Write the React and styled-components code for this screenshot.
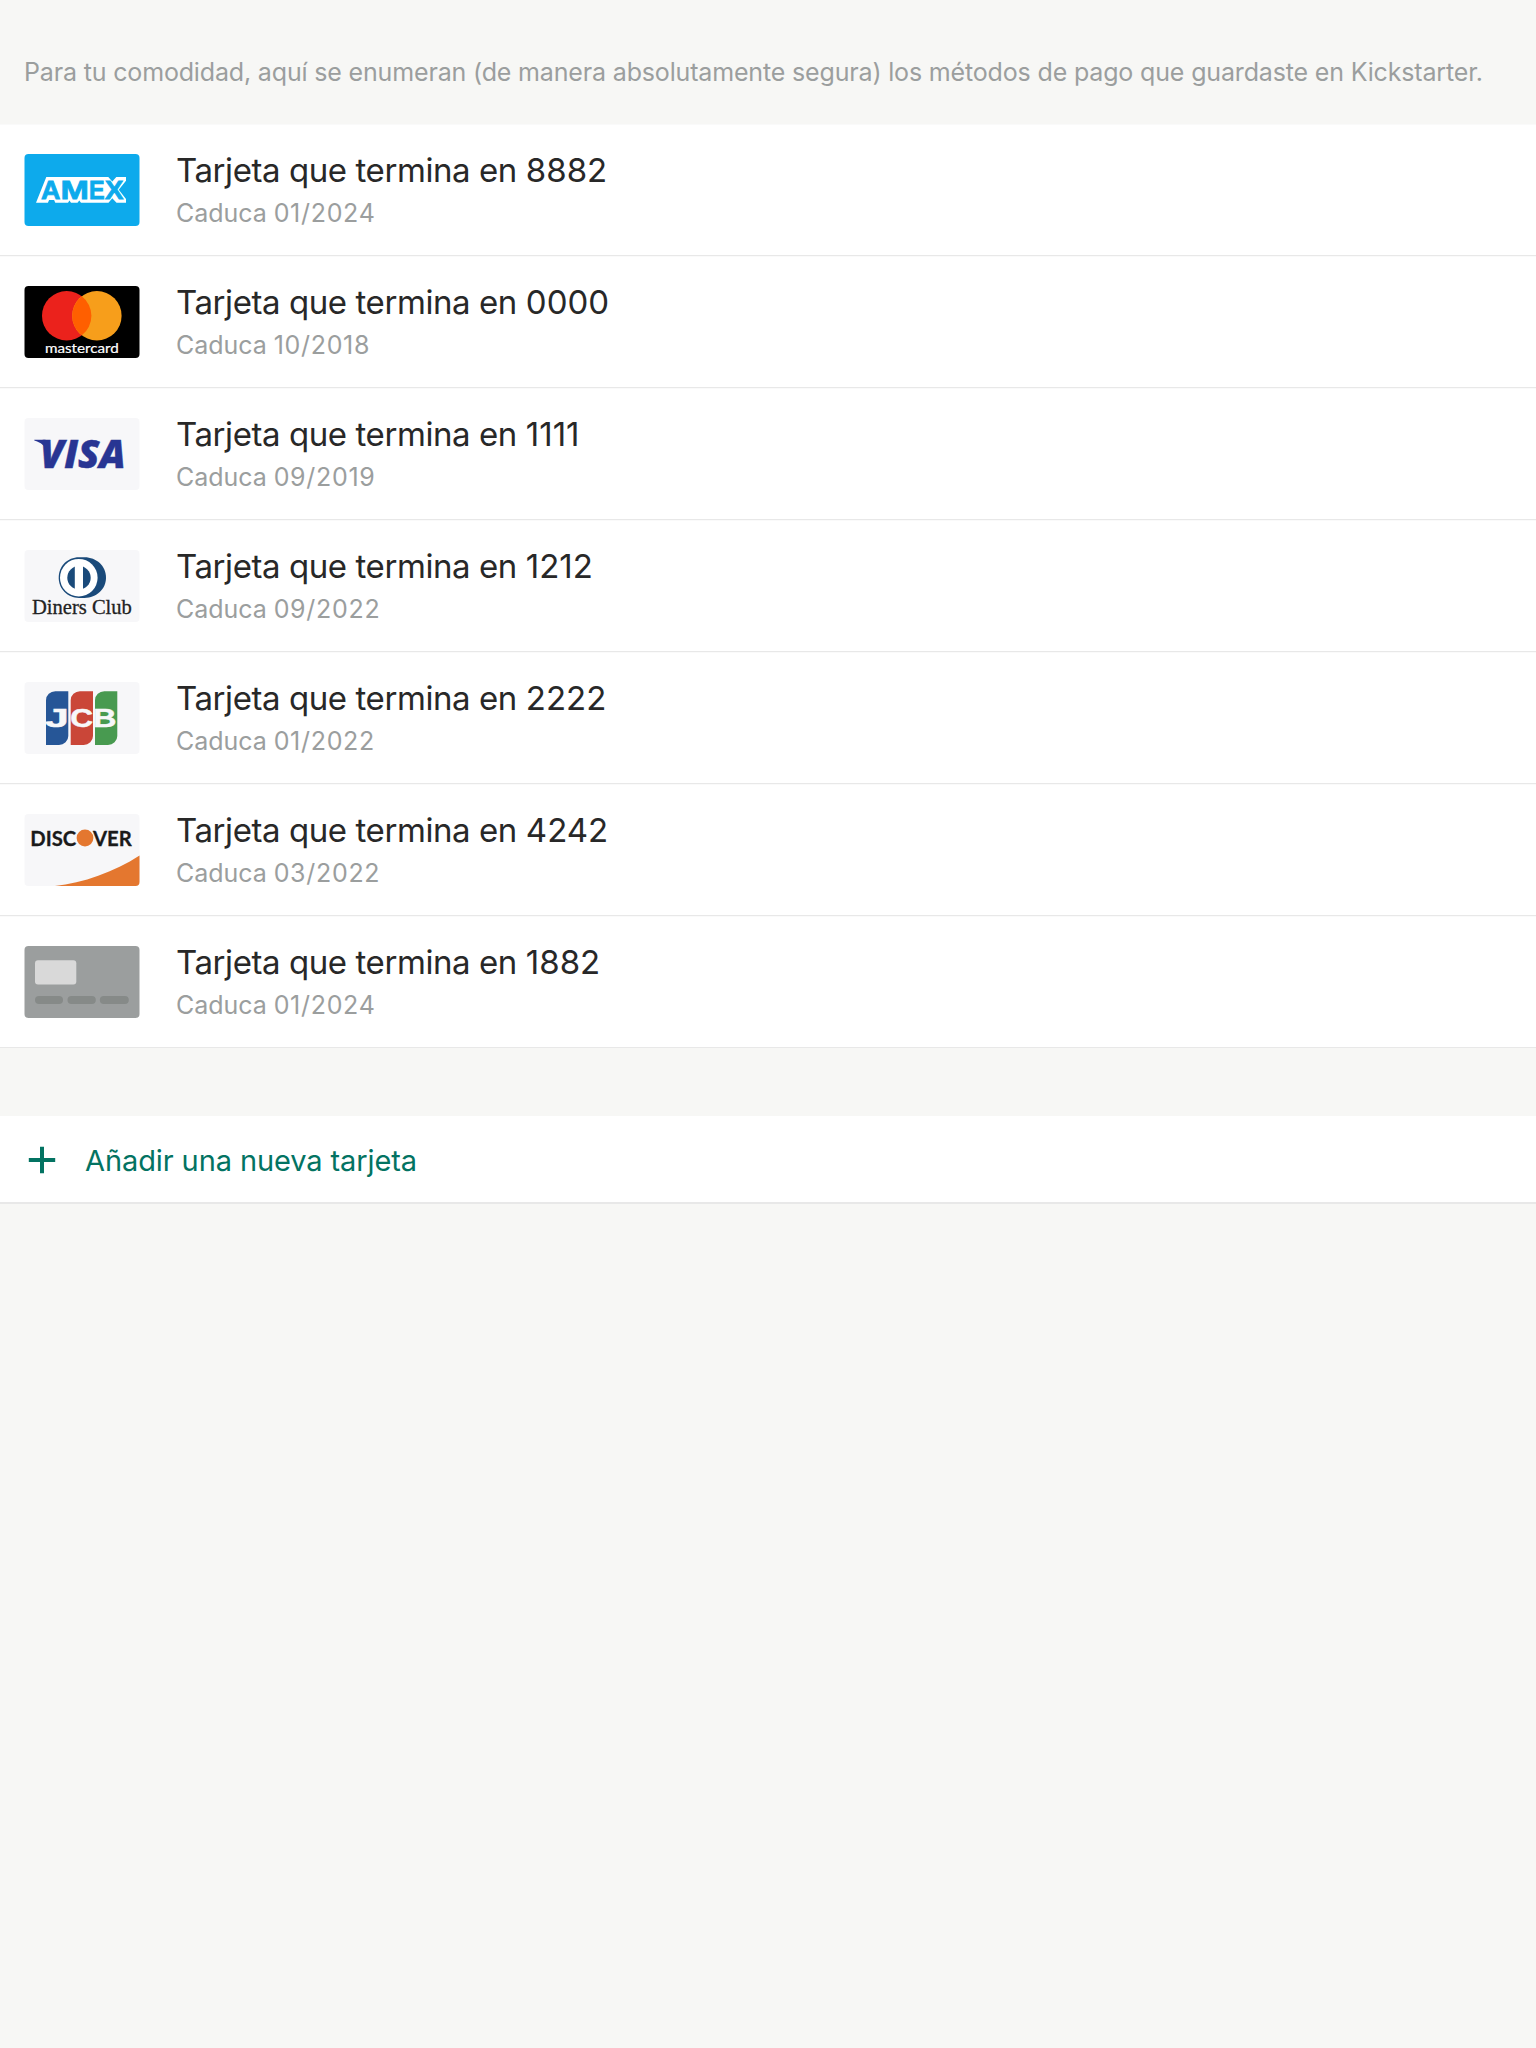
import React from "react";
import styled, { createGlobalStyle } from "styled-components";

const GlobalStyle = createGlobalStyle`
  * { box-sizing: border-box; }
  html, body { margin: 0; background: #f7f7f5; }
  body { font-family: Inter, "Liberation Sans", sans-serif; }
`;

const Screen = styled.main`
  min-height: 2048px;
  background: #f7f7f5;
`;

const Note = styled.p`
  margin: 0;
  height: 124px;
  padding: 55px 24px 0;
  font-size: 25px;
  line-height: 34px;
  letter-spacing: -0.16px;
  white-space: nowrap;
  color: #9b9e9e;
`;

const CardList = styled.ul`
  margin: 0 0 68px;
  padding: 0;
  list-style: none;
`;

const CardRow = styled.li`
  display: flex;
  align-items: center;
  gap: 36px;
  height: 132px;
  padding-left: 24px;
  background: #fff;
  box-shadow: inset 0 -1px 0 #e8e8e8, inset 0 1px 0 #fafafa;
`;

const ArtFrame = styled.svg`
  display: block;
  flex: none;
  width: 116px;
  height: 72px;
`;

const CardText = styled.div`
  display: flex;
  flex-direction: column;
  padding-top: 4px;
`;

const CardTitle = styled.span`
  font-size: 33px;
  line-height: 42px;
  letter-spacing: -0.42px;
  color: #282828;
`;

const LastDigits = styled.span`
  letter-spacing: 0;
`;

const CardExpiry = styled.span`
  font-size: 25px;
  line-height: 44px;
  letter-spacing: -0.05px;
  color: #9b9e9e;
`;

const ExpiryDate = styled.span`
  letter-spacing: 0.7px;
`;

const AddButton = styled.button`
  display: flex;
  align-items: center;
  gap: 29px;
  width: 100%;
  height: 88px;
  padding: 0 0 0 28px;
  border: 0;
  background: #fff;
  box-shadow: inset 0 -2px 0 #e8e8e8;
  color: #037362;
  font-family: inherit;
  font-size: 29px;
  line-height: 40px;
  letter-spacing: -0.1px;
  text-align: left;
`;

const AddLabel = styled.span`
  padding-top: 2px;
`;

const PlusIcon = styled.svg`
  display: block;
  flex: none;
  width: 28px;
  height: 28px;
`;

function CardArt({ fill, children }) {
  return (
    <ArtFrame viewBox="-0.5 0 116 72">
      <rect width="115" height="72" rx="4" fill={fill} />
      {children}
    </ArtFrame>
  );
}

function Word({ x, y, w, ...rest }) {
  return <text x={x} y={y} textLength={w} lengthAdjust="spacingAndGlyphs" {...rest} />;
}

const Amex = () => (
  <CardArt fill="#0daaec">
    <path
      fill="#fff"
      d="M11.5 48.7 L21.8 23 H83.8 L87.8 27.4 L91.8 23 H101.5 V26.8 L94.3 35.8 L101.5 45 V48.7 H92 L87.8 44.2 L84 48.7 H56.5 L54.8 46.5 L53 48.7 H46.5 L45 46.5 L43.5 48.7 H30.8 L29.6 46 H24.6 L23.4 48.7 Z"
    />
    <g fill="#0daaec" stroke="#0daaec" strokeWidth="0.8" fontFamily="'Liberation Sans', sans-serif" fontWeight="700" fontSize="26">
      <Word x={16.4} y={44.8} w={19.4}>A</Word>
      <Word x={36} y={44.8} w={28.4}>M</Word>
      <Word x={64.6} y={44.8} w={15.6}>E</Word>
      <Word x={80.4} y={44.8} w={18.4}>X</Word>
    </g>
  </CardArt>
);

const Mastercard = () => (
  <CardArt fill="#000">
    <circle cx="42.2" cy="29.8" r="24.7" fill="#eb221c" />
    <circle cx="72.4" cy="29.8" r="24.7" fill="#f79e1b" />
    <path fill="#ff5f00" d="M57.3 10.25 A24.7 24.7 0 0 1 57.3 49.35 A24.7 24.7 0 0 1 57.3 10.25 Z" />
    <Word x={20.4} y={67} w={74} fill="#fff" stroke="#fff" strokeWidth="0.2" fontFamily="Lato, sans-serif" fontSize="14.2">
      mastercard
    </Word>
  </CardArt>
);

const Visa = () => (
  <CardArt fill="#f7f7f9">
    <path fill="#283593" d="M9.8 21.7 H21 L24 34 C21 28 16 24 9.8 22.4 Z" />
    <Word x={15.6} y={50} w={85.5} fill="#283593" stroke="#283593" strokeWidth="0.5" fontFamily="'Open Sans', sans-serif" fontWeight="800" fontStyle="italic" fontSize="39.5">
      VISA
    </Word>
  </CardArt>
);

const Diners = () => (
  <CardArt fill="#f7f7f9">
    <path fill="#1a4a7a" d="M54.5 7.3 H60 C72 7.3 81.5 16 81.5 27.8 C81.5 39 72 48 60 48 H54.5 C43 48 34.2 39 34.2 27.8 C34.2 16 43 7.3 54.5 7.3 Z" />
    <circle cx="54.3" cy="27.7" r="18.8" fill="#fff" />
    <circle cx="54.5" cy="27.7" r="11.7" fill="#1a4a7a" />
    <rect x="50.3" y="15" width="8.2" height="25.4" fill="#fff" />
    <Word x={7.4} y={64.3} w={100} fill="#222" stroke="#222" strokeWidth="0.3" fontFamily="'Liberation Serif', serif" fontSize="21.5">
      Diners Club
    </Word>
  </CardArt>
);

const Jcb = () => (
  <CardArt fill="#f7f7f9">
    <path fill="#265697" d="M31 9.3 H43.8 V54 A9.3 9 0 0 1 34.5 63 H21.5 V18.3 A9.3 9 0 0 1 31 9.3 Z" />
    <path fill="#ca4638" d="M55.7 9.3 H68.5 V54 A9.3 9 0 0 1 59.2 63 H46.2 V18.3 A9.3 9 0 0 1 55.7 9.3 Z" />
    <path fill="#489a50" d="M80 9.3 H92.8 V54 A9.3 9 0 0 1 83.5 63 H70.5 V18.3 A9.3 9 0 0 1 80 9.3 Z" />
    <g fill="#f7f7f9" stroke="#f7f7f9" strokeWidth="0.5" fontFamily="'Liberation Sans', sans-serif" fontWeight="700" fontSize="25">
      <Word x={20.6} y={44.5} w={23.8}>J</Word>
      <Word x={45.8} y={44.5} w={22.8}>C</Word>
      <Word x={68.6} y={44.5} w={23.4}>B</Word>
    </g>
  </CardArt>
);

const Discover = () => (
  <CardArt fill="#f7f7f9">
    <path fill="#e4772f" d="M30.5 72 C58 69 90 58 115 41.5 V68 A4 4 0 0 1 111 72 Z" />
    <circle cx="60.5" cy="24" r="8.4" fill="#e4772f" />
    <g fill="#1a1a1a" stroke="#1a1a1a" strokeWidth="0.3" fontFamily="Lato, sans-serif" fontWeight="700" fontSize="21.5">
      <Word x={5.8} y={31.9} w={46}>DISC</Word>
      <Word x={68.4} y={31.9} w={38.8}>VER</Word>
    </g>
  </CardArt>
);

const Generic = () => (
  <CardArt fill="#9b9e9e">
    <rect x="10.5" y="14.2" width="41.3" height="24.4" rx="3" fill="#d9d9d9" />
    <g fill="#868a88">
      <rect x="10.5" y="50" width="28" height="8" rx="4" />
      <rect x="43" y="50" width="28.3" height="8" rx="4" />
      <rect x="75.3" y="50" width="29" height="8" rx="4" />
    </g>
  </CardArt>
);

const cards = [
  { Art: Amex, last: "8882", expiry: "01/2024" },
  { Art: Mastercard, last: "0000", expiry: "10/2018" },
  { Art: Visa, last: "1111", expiry: "09/2019" },
  { Art: Diners, last: "1212", expiry: "09/2022" },
  { Art: Jcb, last: "2222", expiry: "01/2022" },
  { Art: Discover, last: "4242", expiry: "03/2022" },
  { Art: Generic, last: "1882", expiry: "01/2024" },
];

export default function App() {
  return (
    <Screen>
      <GlobalStyle />
      <Note>
        Para tu comodidad, aquí se enumeran (de manera absolutamente segura) los métodos de pago que guardaste en Kickstarter.
      </Note>
      <CardList>
        {cards.map(({ Art, last, expiry }) => (
          <CardRow key={last}>
            <Art />
            <CardText>
              <CardTitle>
                Tarjeta que termina en <LastDigits>{last}</LastDigits>
              </CardTitle>
              <CardExpiry>
                Caduca <ExpiryDate>{expiry}</ExpiryDate>
              </CardExpiry>
            </CardText>
          </CardRow>
        ))}
      </CardList>
      <AddButton>
        <PlusIcon viewBox="0 0 28 28" fill="none" stroke="#037362" strokeWidth="4">
          <path d="M14 0.7 V27.3 M0.8 14 H27.2" />
        </PlusIcon>
        <AddLabel>Añadir una nueva tarjeta</AddLabel>
      </AddButton>
    </Screen>
  );
}
